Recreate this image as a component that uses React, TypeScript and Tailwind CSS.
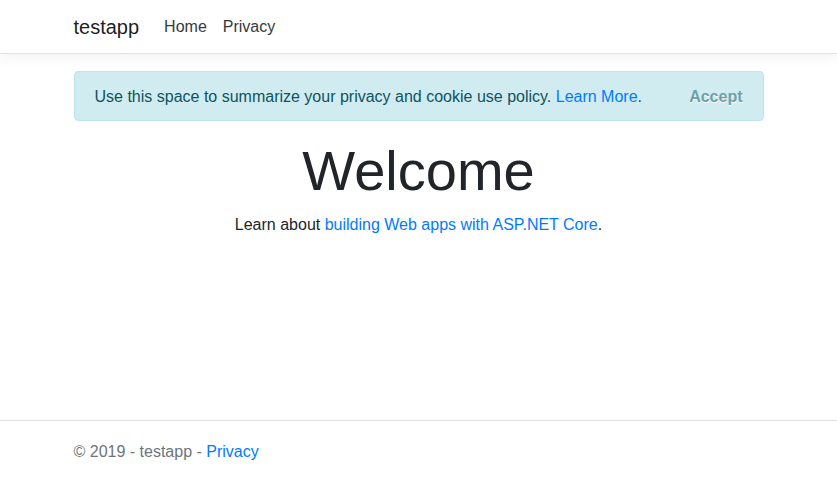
import React, { useState } from 'react';

export default function App() {
    const [showConsent, setShowConsent] = useState(true);

    return (
        <div className="min-h-screen flex flex-col bg-white text-[#212529] text-base font-['Liberation_Sans',Arial,sans-serif]">
            {/* Header / navbar */}
            <header className="h-[54px] border-b border-[#dee2e6] bg-white shadow-[0_4px_12px_rgba(0,0,0,0.05)]">
                <nav className="mx-auto w-[720px] px-[15px] h-full flex items-center">
                    <a href="#" className="text-[20px] leading-[30px] text-black/90 mr-[17px]">
                        testapp
                    </a>
                    <ul className="flex">
                        <li>
                            <a href="#" className="block px-2 leading-6 text-[#343a40]">Home</a>
                        </li>
                        <li>
                            <a href="#" className="block px-2 leading-6 text-[#343a40]">Privacy</a>
                        </li>
                    </ul>
                </nav>
            </header>

            <div className="mx-auto w-[720px] px-[15px] flex-1">
                <main className="pb-3">
                    {/* Cookie consent */}
                    {showConsent && (
                        <div className="mt-[17px] mb-4 relative rounded border border-[#bee5eb] bg-[#d1ecf1] text-[#0c5460] pt-[13px] pb-[11px] pl-5 pr-16 leading-6">
                            Use this space to summarize your privacy and cookie use policy.{' '}
                            <a href="#" className="text-[#007bff]">Learn More</a>.
                            <button
                                type="button"
                                onClick={() => setShowConsent(false)}
                                className="absolute top-0 right-0 pt-[13px] pb-[11px] px-5 leading-6 font-bold text-[#6ea0a8] [text-shadow:0_1px_0_#fff]"
                            >
                                Accept
                            </button>
                        </div>
                    )}

                    <div className="text-center">
                        <h1 className="text-[56px] leading-[1.2] font-light mb-[9px]">Welcome</h1>
                        <p className="leading-6">
                            Learn about{' '}
                            <a href="#" className="text-[#007bff]">building Web apps with ASP.NET Core</a>.
                        </p>
                    </div>
                </main>
            </div>

            {/* Footer */}
            <footer className="h-[58px] border-t border-[#dee2e6] text-[#6c757d] overflow-hidden whitespace-nowrap">
                <div className="mx-auto w-[720px] px-[15px] leading-[62px]">
                    &copy; 2019 - testapp - <a href="#" className="text-[#007bff]">Privacy</a>
                </div>
            </footer>
        </div>
    );
}
